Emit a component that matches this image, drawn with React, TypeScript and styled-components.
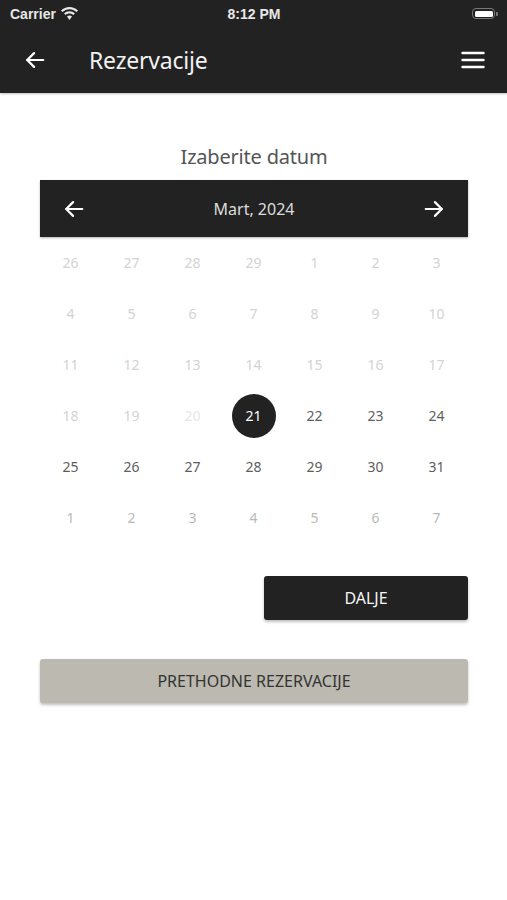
import styled, { createGlobalStyle } from "styled-components";

const GlobalStyle = createGlobalStyle`
  html, body {
    margin: 0;
    padding: 0;
    background: #ffffff;
  }
  body {
    font-family: "Noto Sans", "Open Sans", sans-serif;
  }
`;

const Screen = styled.div`
  width: 507px;
  min-height: 900px;
  background: #ffffff;
  display: flex;
  flex-direction: column;
`;

const TopBar = styled.header`
  background: #222222;
  color: #ffffff;
  height: 93px;
  display: flex;
  flex-direction: column;
  box-shadow: 0 1px 2px rgba(0, 0, 0, 0.25);
`;

const StatusBar = styled.div`
  height: 27px;
  padding: 0 9px 0 10px;
  display: grid;
  grid-template-columns: 1fr auto 1fr;
  align-items: center;
  font-family: "Liberation Sans", Arial, sans-serif;
  font-size: 14px;
  font-weight: 600;
  color: #e8e8e8;
`;

const Carrier = styled.div`
  display: flex;
  align-items: center;
  gap: 5px;
`;

const Clock = styled.div`
  text-align: center;
`;

const Battery = styled.div`
  justify-self: end;
  display: flex;
  align-items: center;
`;

const BatteryBody = styled.div`
  width: 23px;
  height: 11px;
  border: 1.5px solid #777;
  border-radius: 4px;
  padding: 1.5px;
  box-sizing: border-box;
  display: flex;
  &::before {
    content: "";
    flex: 1;
    background: #ffffff;
    border-radius: 1.5px;
  }
`;

const BatteryCap = styled.div`
  width: 2px;
  height: 4px;
  background: #777;
  border-radius: 0 1px 1px 0;
  margin-left: 1px;
`;

const NavRow = styled.div`
  flex: 1;
  display: flex;
  align-items: center;
  padding: 0 22px 0 24px;
`;

const IconButton = styled.button`
  background: none;
  border: none;
  padding: 0;
  color: #ffffff;
  display: flex;
  align-items: center;
  cursor: pointer;
`;

const Title = styled.h1`
  flex: 1;
  margin: 0 0 0 43px;
  font-size: 23px;
  font-weight: 400;
  color: #f2f2f2;
  letter-spacing: -0.2px;
`;

const Content = styled.main`
  padding: 0 39px 0 40px;
  display: flex;
  flex-direction: column;
`;

const Heading = styled.h2`
  margin: 50px 0 10px;
  text-align: center;
  font-size: 20px;
  font-weight: 400;
  color: #555555;
  letter-spacing: -0.2px;
`;

const MonthBar = styled.div`
  height: 57px;
  background: #222222;
  display: flex;
  align-items: center;
  justify-content: space-between;
  padding: 0 23px;
  box-shadow: 0 1px 2px rgba(0, 0, 0, 0.3);
`;

const MonthLabel = styled.span`
  font-size: 16px;
  color: #dddddd;
`;

const Grid = styled.div`
  display: grid;
  grid-template-columns: repeat(7, 61px);
  grid-auto-rows: 51px;
`;

type DayKind = "past" | "faint" | "active" | "next" | "selected";

const dayColors: Record<DayKind, string> = {
  past: "#d3d3d3",
  faint: "#e6e6e6",
  active: "#5e5e5e",
  next: "#b9b9b9",
  selected: "#ffffff",
};

const Day = styled.div<{ $kind: DayKind }>`
  display: flex;
  align-items: center;
  justify-content: center;
  font-size: 14px;
  color: ${(p) => dayColors[p.$kind]};
`;

const Selected = styled.span`
  width: 44px;
  height: 44px;
  border-radius: 50%;
  background: #222222;
  color: #ffffff;
  display: flex;
  align-items: center;
  justify-content: center;
  font-size: 14px;
`;

const Actions = styled.div`
  margin-top: 33px;
  display: flex;
  flex-direction: column;
  align-items: flex-end;
  gap: 39px;
`;

const Button = styled.button<{ $variant: "dark" | "light"; $full?: boolean }>`
  height: 44px;
  width: ${(p) => (p.$full ? "100%" : "204px")};
  border: none;
  border-radius: 3px;
  background: ${(p) => (p.$variant === "dark" ? "#222222" : "#bbb9b0")};
  color: ${(p) => (p.$variant === "dark" ? "#f5f5f5" : "#333333")};
  font-family: "Noto Sans", "Open Sans", sans-serif;
  font-size: 16px;
  box-shadow: 0 2px 3px rgba(0, 0, 0, 0.25);
  cursor: pointer;
`;

const Arrow = ({ dir }: { dir: "left" | "right" }) => (
  <svg width="22" height="22" viewBox="0 0 24 24" fill="none" stroke="#fff" strokeWidth="2.4" strokeLinecap="round" strokeLinejoin="round">
    {dir === "left" ? (
      <>
        <path d="M21 12H3.5" />
        <path d="M11 4.5L3.5 12l7.5 7.5" />
      </>
    ) : (
      <>
        <path d="M3 12h17.5" />
        <path d="M13 4.5l7.5 7.5-7.5 7.5" />
      </>
    )}
  </svg>
);

const Wifi = () => (
  <svg width="17" height="13" viewBox="0 0 17 13" fill="#e8e8e8">
    <path d="M8.5 0C5.2 0 2.3 1.3 0 3.4l1.5 1.6C3.4 3.3 5.8 2.2 8.5 2.2s5.1 1.1 7 2.8L17 3.4C14.7 1.3 11.8 0 8.5 0z" />
    <path d="M8.5 4.3c-2.1 0-4 .8-5.4 2.1l1.5 1.6c1-1 2.4-1.5 3.9-1.5s2.9.6 3.9 1.5l1.5-1.6c-1.4-1.3-3.3-2.1-5.4-2.1z" />
    <path d="M8.5 8.5c-1 0-1.9.4-2.5 1L8.5 13 11 9.5c-.6-.6-1.5-1-2.5-1z" />
  </svg>
);

const Menu = () => (
  <svg width="24" height="20" viewBox="0 0 24 20" stroke="#fff" strokeWidth="2.4" strokeLinecap="round">
    <path d="M1.5 3h21M1.5 10h21M1.5 17h21" />
  </svg>
);

type Cell = { n: number; kind: DayKind };

const buildDays = (): Cell[] => {
  const cells: Cell[] = [];
  [26, 27, 28, 29].forEach((n) => cells.push({ n, kind: "past" }));
  for (let n = 1; n <= 31; n++) {
    let kind: DayKind = "active";
    if (n < 20) kind = "past";
    else if (n === 20) kind = "faint";
    else if (n === 21) kind = "selected";
    cells.push({ n, kind });
  }
  for (let n = 1; n <= 7; n++) cells.push({ n, kind: "next" });
  return cells;
};

export default function App() {
  const days = buildDays();
  return (
    <>
      <GlobalStyle />
      <Screen>
        <TopBar>
          <StatusBar>
            <Carrier>
              Carrier <Wifi />
            </Carrier>
            <Clock>8:12 PM</Clock>
            <Battery>
              <BatteryBody />
              <BatteryCap />
            </Battery>
          </StatusBar>
          <NavRow>
            <IconButton aria-label="Nazad">
              <Arrow dir="left" />
            </IconButton>
            <Title>Rezervacije</Title>
            <IconButton aria-label="Meni">
              <Menu />
            </IconButton>
          </NavRow>
        </TopBar>

        <Content>
          <Heading>Izaberite datum</Heading>
          <MonthBar>
            <IconButton aria-label="Prethodni mjesec">
              <Arrow dir="left" />
            </IconButton>
            <MonthLabel>Mart, 2024</MonthLabel>
            <IconButton aria-label="Sljedeći mjesec">
              <Arrow dir="right" />
            </IconButton>
          </MonthBar>
          <Grid>
            {days.map((d, i) => (
              <Day key={i} $kind={d.kind}>
                {d.kind === "selected" ? <Selected>{d.n}</Selected> : d.n}
              </Day>
            ))}
          </Grid>
          <Actions>
            <Button $variant="dark">DALJE</Button>
            <Button $variant="light" $full>
              PRETHODNE REZERVACIJE
            </Button>
          </Actions>
        </Content>
      </Screen>
    </>
  );
}
